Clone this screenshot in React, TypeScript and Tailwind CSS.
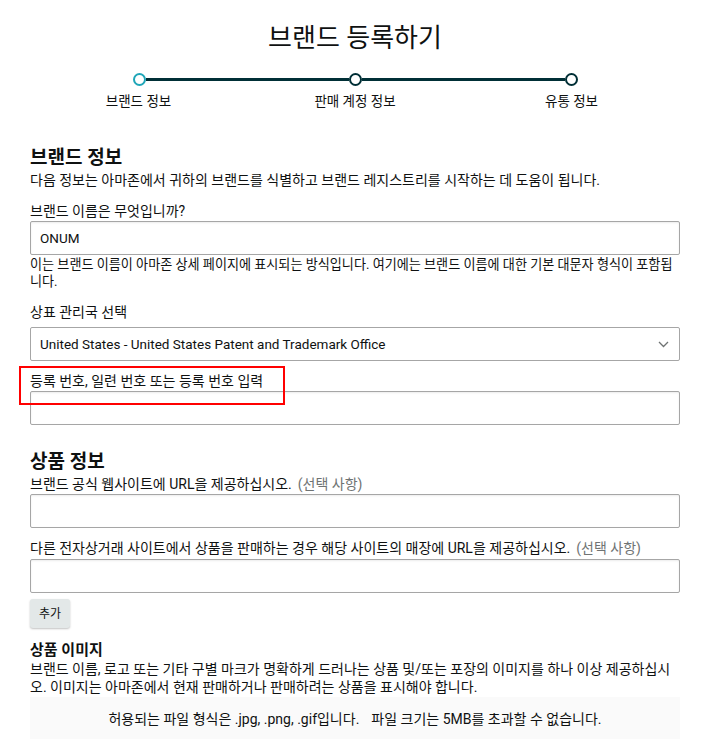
import React from "react";

const font = {
  fontFamily: 'Roboto, "Noto Sans CJK KR", sans-serif',
};

function Field({ label, optional }: { label: string; optional?: boolean }) {
  return (
    <div className="text-[14px] leading-[20px] text-[#0f1111]">
      {label}
      {optional && <span className="ml-[6px] text-[#6f7373]">(선택 사항)</span>}
    </div>
  );
}

function Input({ value }: { value?: string }) {
  return (
    <div className="h-[34px] border border-[#a6a6a6] rounded-[2px] px-[9px] flex items-center text-[13.5px] text-[#0f1111] shadow-[inset_0_1px_2px_rgba(15,17,17,0.08)]">
      {value}
    </div>
  );
}

export default function App() {
  const steps = ["브랜드 정보", "판매 계정 정보", "유통 정보"];

  return (
    <div className="min-h-screen bg-white" style={font}>
      <div className="w-[710px] px-[30px] pb-4 text-[#0f1111]">
        {/* Title */}
        <h1 className="pt-[23px] text-center text-[26px] leading-[30px] font-normal text-[#0f1111]">
          브랜드 등록하기
        </h1>

        {/* Stepper */}
        <div className="mx-auto mt-[20px] w-[445px]">
          <div className="flex items-center">
            <div className="w-[13px] h-[13px] rounded-full border-2 border-[#1fa6b8] bg-white" />
            <div className="flex-1 h-[3px] bg-[#002f36]" />
            <div className="w-[13px] h-[13px] rounded-full border-2 border-[#002f36] bg-white" />
            <div className="flex-1 h-[3px] bg-[#002f36]" />
            <div className="w-[13px] h-[13px] rounded-full border-2 border-[#002f36] bg-white" />
          </div>
          <div className="flex justify-between mt-[5px] px-[6px]">
            {steps.map((s) => (
              <div key={s} className="w-0 flex justify-center">
                <span className="whitespace-nowrap text-[13.5px] leading-[20px] text-[#0f1111]">
                  {s}
                </span>
              </div>
            ))}
          </div>
        </div>

        {/* Brand info */}
        <h2 className="mt-[35px] text-[19px] leading-[24px] font-bold">브랜드 정보</h2>
        <p className="text-[14px] leading-[20px]">
          다음 정보는 아마존에서 귀하의 브랜드를 식별하고 브랜드 레지스트리를 시작하는 데 도움이 됩니다.
        </p>

        <div className="mt-[11px]">
          <Field label="브랜드 이름은 무엇입니까?" />
          <Input value="ONUM" />
          <p className="mt-[1px] text-[13.1px] leading-[17px] text-[#0f1111] break-all">
            이는 브랜드 이름이 아마존 상세 페이지에 표시되는 방식입니다. 여기에는 브랜드 이름에 대한 기본 대문자 형식이 포함됩니다.
          </p>
        </div>

        <div className="mt-[12px]">
          <Field label="상표 관리국 선택" />
          <div className="mt-[5px] h-[34px] border border-[#a6a6a6] rounded-[2px] pl-[9px] pr-[10px] flex items-center justify-between text-[13.5px]">
            <span>United States - United States Patent and Trademark Office</span>
            <svg width="11" height="7" viewBox="0 0 11 7" fill="none">
              <path d="M1 1l4.5 4.5L10 1" stroke="#6f7373" strokeWidth="1.3" />
            </svg>
          </div>
        </div>

        <div className="relative mt-[10px]">
          <div className="absolute left-[-11px] top-[-5px] w-[266px] h-[39px] border-2 border-[#ff0000]" />
          <Field label="등록 번호, 일련 번호 또는 등록 번호 입력" />
          <Input />
        </div>

        {/* Product info */}
        <h2 className="mt-[25px] text-[19px] leading-[24px] font-bold">상품 정보</h2>
        <Field label="브랜드 공식 웹사이트에 URL을 제공하십시오." optional />
        <Input />

        <div className="mt-[10px]">
          <Field label="다른 전자상거래 사이트에서 상품을 판매하는 경우 해당 사이트의 매장에 URL을 제공하십시오." optional />
          <div className="mt-[1px]">
            <Input />
          </div>
        </div>

        <button className="mt-[6px] h-[29px] px-[9px] rounded-[3px] bg-[#e3e8e8] text-[12px] text-[#0f1111] shadow-[0_1px_2px_rgba(15,17,17,0.25)]">
          추가
        </button>

        {/* Product images */}
        <h3 className="mt-[12px] text-[15px] leading-[20px] font-bold">상품 이미지</h3>
        <p className="text-[14px] leading-[18px] break-all">
          브랜드 이름, 로고 또는 기타 구별 마크가 명확하게 드러나는 상품 및/또는 포장의 이미지를 하나 이상 제공하십시오. 이미지는 아마존에서 현재 판매하거나 판매하려는 상품을 표시해야 합니다.
        </p>
        <div className="mt-[1px] h-[60px] bg-[#fafafa] flex items-start justify-center pt-[12px] text-[14px] leading-[20px]">
          <span>허용되는 파일 형식은 .jpg, .png, .gif입니다.</span>
          <span className="ml-[12px]">파일 크기는 5MB를 초과할 수 없습니다.</span>
        </div>
      </div>
    </div>
  );
}
